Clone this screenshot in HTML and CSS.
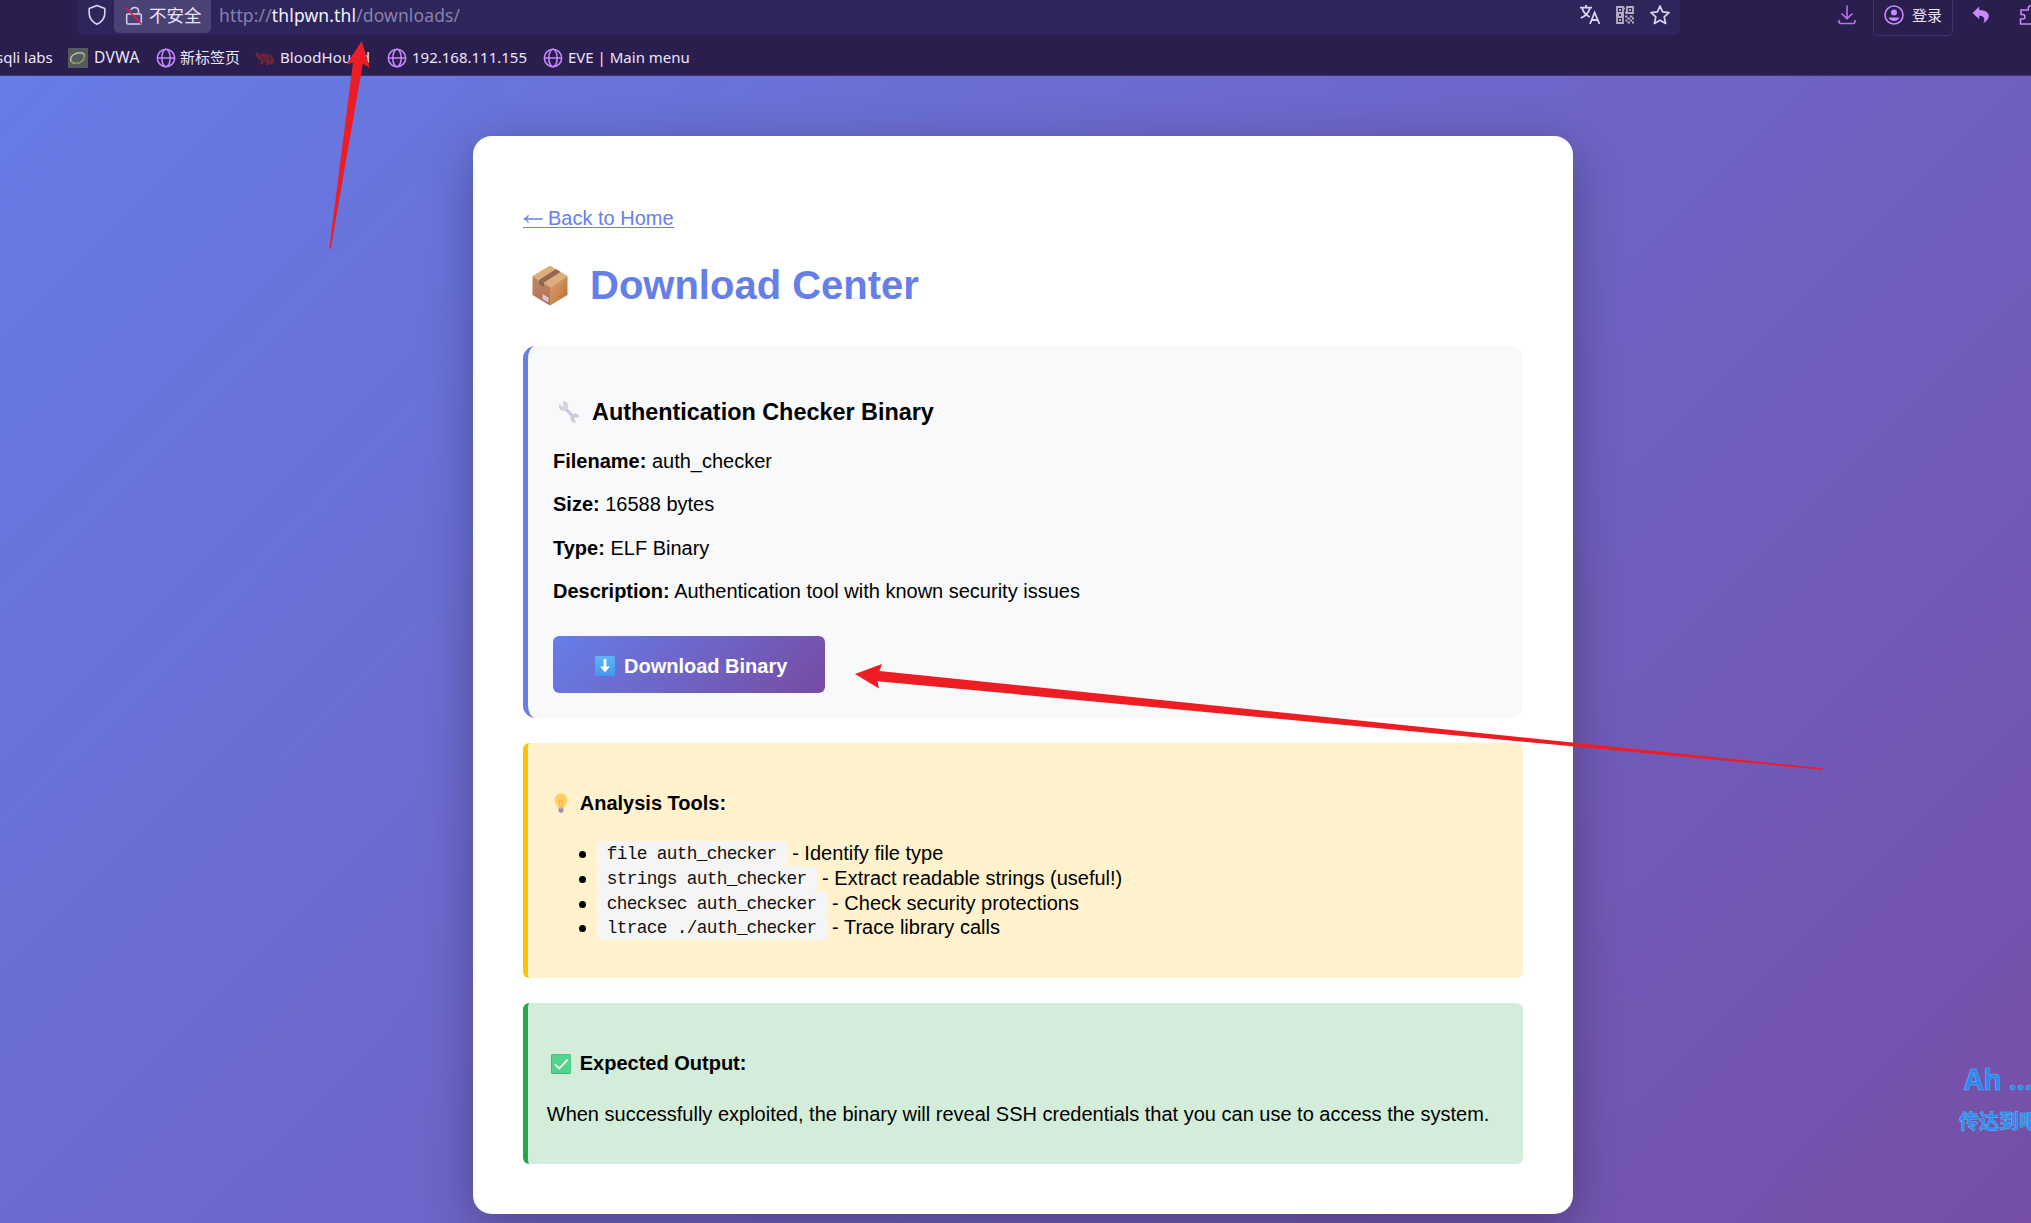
FILE: index.html
```html
<!DOCTYPE html>
<html lang="en">
<head>
<meta charset="utf-8">
<title>Download Center</title>
<link rel="stylesheet" href="styles.css">
</head>
<body>
<svg class="defs" aria-hidden="true">
  <symbol id="globe" viewBox="0 0 20 20"><g fill="none" stroke="#c58aff" stroke-width="1.5"><circle cx="10" cy="10" r="8.7"/><ellipse cx="10" cy="10" rx="4.2" ry="8.7"/><path d="M1.3 10h17.4"/></g></symbol>
</svg>
<header class="chrome">
  <div class="toolbar">
    <div class="urlbar">
      <svg class="shield" viewBox="0 0 20 22"><path d="M10 1.600l7.800 3v4.700c0 4.600-2.600 8.400-7.800 11-5.200-2.600-7.800-6.400-7.800-11V4.600z" fill="none" stroke="#dcd5f4" stroke-width="1.600" stroke-linejoin="round"/></svg>
      <div class="chip">
        <svg class="lock" viewBox="0 0 18 22"><path d="M6 6a4 4 0 0 1 7.500 0v3.500" fill="none" stroke="#d8d2ee" stroke-width="1.500"/><path d="M3 10h12q1.300 0 1.300 1.300v7.400q0 1.300-1.300 1.300H3q-1.300 0-1.300-1.300v-7.400Q1.700 10 3 10z" fill="none" stroke="#d8d2ee" stroke-width="1.500"/><path d="M.8 3.500L17 20.500" stroke="#e8194b" stroke-width="1.500"/></svg>
        <span class="cn">不安全</span>
      </div>
      <div class="url">http://<b>thlpwn.thl</b>/downloads/</div>
      <div class="url-icons">
        <svg width="22" height="22" viewBox="0 0 22 22" fill="none" stroke="#dcd5f4" stroke-width="1.800"><path d="M1 3.700h12M7 1v2.700M3.300 4.500c1.200 4 4 6.800 7.500 8.500M10.800 4.500C9.500 9 6.500 12 1.800 14M11 20l4.600-11.500L20.500 20M12.700 16h6"/></svg>
        <svg width="20" height="20" viewBox="0 0 20 20" fill="none" stroke="#b5afbd" stroke-width="1.800"><path d="M2 2h6v6H2zM12 2h6v6h-6zM2 12h6v6H2z"/><path d="M4 5h2M14 5h2M4 15h2M8 3.500h2M10 7.500h2M1 10h3M6 10h3M10 11.500h2.500M15 11.500h2.500M12.500 13.500H15M17 13.500h2M10.500 15.500h2M15 15.500h2M12.500 17.500H15M17 17.500h2" stroke-width="2"/></svg>
        <svg width="22" height="22" viewBox="0 0 22 22" fill="none" stroke="#dcd5f4" stroke-width="1.700" stroke-linejoin="round"><path d="M11 2l2.600 5.900 6.400.7-4.800 4.300 1.400 6.600L11 16.300l-5.600 3.200 1.400-6.600L2 8.600l6.400-.7z"/></svg>
      </div>
    </div>
    <div class="actions">
      <svg class="dl" viewBox="0 0 18 20" fill="none" stroke="#b576ea" stroke-width="1.600"><path d="M9 .5v13M3.500 8.500L9 13.700l5.500-5.200M1 15v1.500q0 2 2 2h12q2 0 2-2V15"/></svg>
      <div class="login">
        <svg width="20" height="20" viewBox="0 0 20 20"><circle cx="10" cy="10" r="9" fill="none" stroke="#c58aff" stroke-width="1.600"/><circle cx="10" cy="7.500" r="3" fill="#c58aff"/><path d="M4.700 12.500h10.600c-.6 2.200-2.600 3.600-5.300 3.600s-4.700-1.400-5.300-3.600z" fill="#c58aff"/></svg>
        <span class="cn">登录</span>
      </div>
      <svg class="back" viewBox="0 0 18 18"><path d="M7.200.5L.5 7l6.700 6.300V9.700c4.300-.2 6.500 2.300 4.200 7.600 8.500-4.800 7-13.200-4.200-13.300z" fill="#c58aff"/></svg>
      <svg class="ext" viewBox="0 0 20 22" fill="none" stroke="#c58aff" stroke-width="1.500"><path d="M19 6h-4.500V4.300a2.600 2.600 0 0 0-5.200 0V6H2v4.500h1.700a2.200 2.200 0 0 1 0 4.500H1.500v5h17"/></svg>
    </div>
  </div>
  <nav class="bookmarks">
    <span class="bm sqli">sqli labs</span>
    <span class="bm dvwa"><svg width="20" height="20" viewBox="0 0 20 20"><path fill="#555a5d" d="M0 0h20v20H0z"/><path d="M3 13C1 8 8 4 14 5c4 1 3 6-1 9-3 2-8 2-10-1z" fill="none" stroke="#b5bcb2" stroke-width="1.500"/><path d="M3 13c2 3 7 3 10 1 4-3 4-6 2-8" fill="none" stroke="#78953a" stroke-width="1.300"/></svg><i>DVWA</i></span>
    <span class="bm tab"><svg width="20" height="20"><use href="#globe"/></svg><i class="cn">新标签页</i></span>
    <span class="bm blood"><svg width="20" height="16" viewBox="0 0 20 16"><path d="M.3.500l2 3.200L3 2l1.200 3.200C8 2.200 15 3 17.500 7c1.700 2.700 1 5 2.300 6.500l-3-.5.500 2-3-2-1 2h-3l1.500-3-3-1-1 3.500H5L6.500 11 3 8.500 1 5z" fill="#792437"/><path d="M6 5l3 4M9 4l3 6M12 4l3 7M5 8l6 2M15 6l1 5" fill="none" stroke="#351c47" stroke-width=".8"/></svg><i>BloodHound</i></span>
    <span class="bm ip"><svg width="20" height="20"><use href="#globe"/></svg><i>192.168.111.155</i></span>
    <span class="bm eve"><svg width="20" height="20"><use href="#globe"/></svg><i>EVE | Main menu</i></span>
  </nav>
</header>
<div class="page">
  <main class="container">
    <p class="home"><a href="#"><svg class="arrow" viewBox="0 0 20 12"><path d="M5.500 2.200C4.700 4.300 3 5.400 1.300 6c1.700.6 3.400 1.700 4.200 3.800M1.500 6h18" fill="none" stroke="#667eea" stroke-width="1.300"/></svg>Back to Home</a></p>
    <h1><svg class="box" viewBox="0 0 36 41"><defs><linearGradient id="bl" x2="0" y2="1"><stop stop-color="#c08a68"/><stop offset="1" stop-color="#b46f50"/></linearGradient><linearGradient id="br" x2="1" y2="1"><stop stop-color="#dda47c"/><stop offset="1" stop-color="#b96d2b"/></linearGradient></defs><path d="M18 .5L35.500 11 18 22 .5 11z" fill="#dcae7c"/><path d="M.5 11L18 22v18.500L.5 30z" fill="url(#bl)"/><path d="M35.500 11L18 22v18.500L35.500 30z" fill="url(#br)"/><path d="M24 4l4.500 3L12 17.500 7 15z" fill="#946650"/><path d="M7 15l5 2.500v4.500L7 19z" fill="#85624f"/><path d="M10.500 29l6 3.500v5l-6-3.500z" fill="#d9c3d6"/></svg>Download Center</h1>
    <section class="file-card">
      <h3><svg class="wrench" viewBox="0 0 22 22"><path d="M5.500 5.500l11 11.500" stroke="#d2c3e2" stroke-width="3.200"/><circle cx="5.500" cy="5" r="4.800" fill="#d8d2dc"/><circle cx="17" cy="17.200" r="4.600" fill="#d3cbd8"/><path d="M-1 1.500L4.800 4.500 3.500-1M23 16.500l-5.800 1 1.800 5.500" fill="#f8f9fb" stroke="#f8f9fb" stroke-width="1.500"/></svg>Authentication Checker Binary</h3>
      <p><strong>Filename:</strong> auth_checker</p>
      <p><strong>Size:</strong> 16588 bytes</p>
      <p><strong>Type:</strong> ELF Binary</p>
      <p><strong>Description:</strong> Authentication tool with known security issues</p>
      <a class="btn" href="#"><svg viewBox="0 0 20 20"><defs><linearGradient id="dn" x2="0" y2="1"><stop stop-color="#5fb5fc"/><stop offset="1" stop-color="#3f98ee"/></linearGradient></defs><rect width="20" height="20" rx="1.500" fill="url(#dn)"/><path d="M10 3v10" stroke="#fff" stroke-width="2.800"/><path d="M5 10.500h10L10 16.500z" fill="#fff"/></svg>Download Binary</a>
    </section>
    <section class="note tools">
      <h4><svg class="bulb" viewBox="0 0 14 20"><path d="M7 .3A6.500 6.500 0 0 0 .5 6.800c0 3.200 2.700 4.700 3.200 8.200h6.600c.5-3.500 3.200-5 3.200-8.200A6.500 6.500 0 0 0 7 .3z" fill="#ffd061"/><path d="M5 7.500l1 7h2l1-7q-2 2-4 0z" fill="none" stroke="#f5b53d"/><path d="M4.500 15.200h5v2.600L8.300 19.700H5.700L4.500 17.800z" fill="#a48ab0"/></svg>Analysis Tools:</h4>
      <ul>
        <li><code>file auth_checker</code> - Identify file type</li>
        <li><code>strings auth_checker</code> - Extract readable strings (useful!)</li>
        <li><code>checksec auth_checker</code> - Check security protections</li>
        <li><code>ltrace ./auth_checker</code> - Trace library calls</li>
      </ul>
    </section>
    <section class="note output">
      <h4><svg class="check" viewBox="0 0 20 20"><rect width="20" height="20" rx="1.500" fill="#44b581"/><rect x="1" y=".5" width="19" height="18.500" rx="1.500" fill="#54d38d"/><path d="M4 10.300l4.200 4.200 8.500-9" fill="none" stroke="#fff" stroke-width="1.800"/></svg>Expected Output:</h4>
      <p>When successfully exploited, the binary will reveal SSH credentials that you can use to access the system.</p>
    </section>
  </main>
</div>
<div class="pet"><div class="en">Ah ....</div><div class="zh">传达到吧</div></div>
<svg class="marks" viewBox="0 0 2031 1223" fill="#ee1c23"><path d="M361.700 41L369.900 68 362.800 63.700 330.700 249 329.300 248.500 353 62.500 346.500 64.500z"/><path d="M855 674L882 664 879.500 671 1822.500 768.300V769.800L877.500 681.200 879 688.500z"/></svg>
</body>
</html>
```
FILE: styles.css
```css
* { box-sizing: border-box; }
body { margin: 0; width: 2031px; height: 1223px; overflow: hidden; position: relative; background: #6e5fbe; font: 20px/23px "Liberation Sans", Arial, sans-serif; color: #000; }
svg { display: block; flex: none; }
.defs { position: absolute; width: 0; height: 0; }
.cn { font-family: "Noto Sans CJK SC", sans-serif; }

.chrome { height: 76px; background: #2a1e4e; border-bottom: 1px solid #40356a; color: #eae5fb; font-family: "Noto Sans", sans-serif; overflow: hidden; }
.toolbar { display: flex; height: 36px; padding-left: 77px; }
.urlbar { width: 1603px; height: 35px; flex: none; background: #2e255b; border-radius: 0 0 5px 5px; display: flex; align-items: flex-start; }
.shield { width: 20px; height: 22px; margin: 4px 0 0 10px; }
.chip { margin-left: 7px; width: 97px; height: 33px; background: #4a4274; border-radius: 0 0 5px 5px; display: flex; padding-left: 11px; }
.lock { width: 18px; height: 22px; margin-top: 4px; }
.chip .cn { margin: 3px 0 0 6px; font-size: 17.500px; }
.url { margin: 4px 0 0 8px; font-size: 17.500px; letter-spacing: .13px; width: 300px; color: #8981ad; white-space: nowrap; }
.url b { font-weight: 400; color: #f4f1ff; }
.url-icons { display: flex; align-items: center; gap: 14px; margin: 4px 9px 0 auto; }
.actions { display: flex; flex: 1; min-width: 0; overflow: hidden; }
.dl { width: 18px; height: 20px; margin: 5px 0 0 158px; }
.login { flex: none; margin-left: 17px; width: 80px; height: 36px; border: 1px solid #40346a; border-top: 0; border-radius: 0 0 5px 5px; display: flex; padding: 5px 0 0 10px; gap: 8px; white-space: nowrap; }
.login .cn { font-size: 15px; line-height: 20px; }
.back { width: 18px; height: 18px; margin: 6px 0 0 19px; }
.ext { width: 20px; height: 22px; margin: 4px 0 0 29px; }

.bookmarks { display: flex; height: 39px; align-items: center; padding-top: 4px; font-size: 15px; white-space: nowrap; }
.bm { display: flex; align-items: center; flex: none; gap: 6px; height: 22px; }
.bm i { font-style: normal; }
.bm .cn { line-height: 21px; margin-bottom: 2px; }
.sqli { width: 68px; margin-left: -4px; }
.sqli + .bm { margin-left: 4px; }
.dvwa { width: 88px; }
.dvwa i { font-size: 15.500px; letter-spacing: .4px; }
.tab { width: 99px; gap: 4px; }
.blood { width: 132px; gap: 5px; }
.blood i { letter-spacing: .1px; }
.ip { width: 156px; gap: 5px; }
.eve { gap: 5px; }

.page { width: 2048px; height: 1198px; padding: 60px 0 0 473px; background: linear-gradient(135deg, #667eea -5%, #764ba2 106%); }
.container { width: 1100px; height: 1078px; padding: 50px; background: #fff; border-radius: 18.750px; box-shadow: 0 12.500px 50px rgba(0,0,0,.3); }
p { margin: 20px 0; }
.home { height: 23px; margin: 20px 0 0; }
.home a { color: #667eea; display: inline-flex; border-bottom: 1px solid #667eea; line-height: 25px; height: 22px; text-decoration: none; }
.arrow { width: 20px; height: 12px; margin: 7px 5px 0 0; }
h1 { display: flex; align-items: center; margin: 27px 0 0; height: 58px; font-size: 40px; line-height: 46px; color: #667eea; }
.box { width: 36px; height: 41px; margin: 0 22px 0 9px; }
.file-card { margin-top: 32px; height: 371.500px; padding: 25px; border-left: 5px solid #667eea; border-radius: 12.500px; background: #f8f9fb; }
h3 { display: flex; align-items: center; margin: 26px 0 22px; height: 31px; font-size: 23.400px; }
.wrench { width: 22px; height: 22px; margin: -1px 12px 0 5px; }
.file-card p { line-height: 23.300px; }
.btn { display: flex; align-items: center; width: 272px; height: 57px; margin-top: 33px; padding: 3px 0 0 42px; border-radius: 6.250px; background: linear-gradient(135deg, #667eea 0%, #764ba2 100%); color: #fff; font-weight: bold; text-decoration: none; }
.btn svg { width: 20px; height: 20px; margin-right: 9px; }
.note { margin-top: 25px; padding: 18.750px; border-left: 5px solid; border-radius: 6.250px; }
.tools { height: 235px; background: #fff2cd; border-color: #ffc107; }
.output { height: 161px; background: #d4ecda; border-color: #28a745; }
h4 { display: flex; align-items: center; height: 27px; margin: 29px 0 0; font-size: 20px; }
.bulb { width: 14px; height: 20px; margin: -1px 12px 0 7px; }
.check { width: 20px; height: 20px; margin: 0 9px 0 4px; }
ul { margin: 24px 0 0; padding-left: 50px; list-style: none; }
li { display: flex; white-space: pre; height: 24.700px; line-height: 24.700px; }
li::before { content: ""; flex: none; width: 7px; height: 7px; margin: 10px 11px 0 -18px; border-radius: 50%; background: #000; }
code { height: 24.700px; padding: 0 10px; border-radius: 3.750px; background: #f5f5f5; font: 17.800px/26px "Liberation Mono", monospace; letter-spacing: -.68px; color: #111; }
.output p { margin: 26px 0 0; white-space: nowrap; }

.pet { position: absolute; left: 1959px; top: 1063px; width: 72px; overflow: hidden; color: #2c87f0; white-space: nowrap; -webkit-text-stroke: .6px #59b8ee; }
.en { padding-left: 5px; font: bold 28px/32px "Noto Sans", sans-serif; }
.zh { margin-top: 14px; font: bold 20px/24px "Noto Sans CJK SC", sans-serif; }
.marks { position: absolute; left: 0; top: 0; width: 2031px; height: 1223px; pointer-events: none; }
```
